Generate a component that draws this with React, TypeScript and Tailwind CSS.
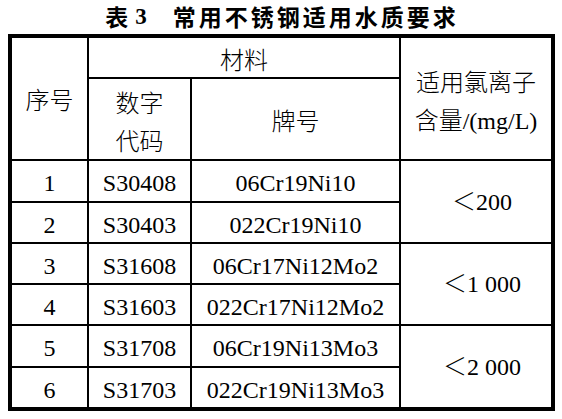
import React from "react";

const F = { fontFamily: '"Liberation Serif", "Noto Sans CJK SC", serif' };

const rows = [
  ["1", "S30408", "06Cr19Ni10"],
  ["2", "S30403", "022Cr19Ni10"],
  ["3", "S31608", "06Cr17Ni12Mo2"],
  ["4", "S31603", "022Cr17Ni12Mo2"],
  ["5", "S31708", "06Cr19Ni13Mo3"],
  ["6", "S31703", "022Cr19Ni13Mo3"],
];

const limits = ["＜200", "＜1 000", "＜2 000"];
const limitRows = ["row-start-3 row-span-2", "row-start-5 row-span-2", "row-start-7 row-span-2"];
const rowStarts = ["row-start-3", "row-start-4", "row-start-5", "row-start-6", "row-start-7", "row-start-8"];

export default function App() {
  return (
    <div className="w-[562px] h-[419px] bg-white text-black overflow-hidden">
      <div className="h-[34px] flex items-center justify-center pb-[2px] pl-[2px]">
        <span
          className="text-[23px] font-bold leading-none"
          style={{ fontFamily: '"Noto Sans CJK SC", sans-serif' }}
        >
          表
        </span>
        <span className="text-[23px] font-bold leading-none ml-[7px]" style={F}>
          3
        </span>
        <span
          className="text-[23px] font-bold leading-none ml-[26px] tracking-[3px]"
          style={{ fontFamily: '"Noto Sans CJK SC", sans-serif' }}
        >
          常用不锈钢适用水质要求
        </span>
      </div>
      <div className="ml-[8px] w-[547px] bg-black p-[4px]">
        <div className="text-[24px] leading-none" style={F}>
          <div className="grid grid-cols-[75px_101px_207px_150px] grid-rows-[39px_80px_40px_39px_39px_39px_40px_39px] gap-[2px] font-light">
            <div className="bg-white col-start-1 row-start-1 row-span-2 flex items-center justify-center pt-[4px]">
              序号
            </div>
            <div className="bg-white col-start-2 col-span-2 row-start-1 flex items-center justify-center pt-[6px]">
              材料
            </div>
            <div className="bg-white col-start-4 row-start-1 row-span-2 flex flex-col items-center justify-center leading-[38px] pt-[6px]">
              <span>适用氯离子</span>
              <span>含量/(mg/L)</span>
            </div>
            <div className="bg-white col-start-2 row-start-2 flex flex-col items-center justify-center leading-[38px] pt-[8px]">
              <span>数字</span>
              <span>代码</span>
            </div>
            <div className="bg-white col-start-3 row-start-2 flex items-center justify-center pt-[6px]">
              牌号
            </div>
            {rows.map((r, i) => (
              <React.Fragment key={i}>
                <div className={`bg-white col-start-1 ${rowStarts[i]} flex items-center justify-center pt-[4px]`}>
                  {r[0]}
                </div>
                <div className={`bg-white col-start-2 ${rowStarts[i]} flex items-center justify-center pt-[4px]`}>
                  {r[1]}
                </div>
                <div className={`bg-white col-start-3 ${rowStarts[i]} flex items-center justify-center pt-[4px]`}>
                  {r[2]}
                </div>
              </React.Fragment>
            ))}
            {limits.map((l, i) => (
              <div
                key={l}
                className={`bg-white col-start-4 ${limitRows[i]} flex items-center justify-center pl-[12px]`}
              >
                {l}
              </div>
            ))}
          </div>
        </div>
      </div>
    </div>
  );
}
